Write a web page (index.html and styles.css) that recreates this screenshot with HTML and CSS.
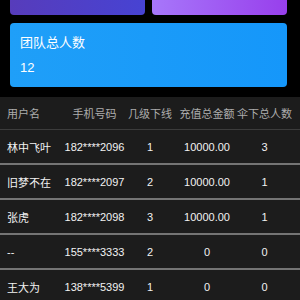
FILE: index.html
```html
<!DOCTYPE html>
<html lang="zh-CN">
<head>
  <meta charset="UTF-8">
  <meta name="viewport" content="width=device-width, initial-scale=1">
  <title>团队</title>
  <link rel="stylesheet" href="styles.css">
</head>
<body>
<div class="summary">
  <div class="card-row">
    <div class="card card-violet"></div>
    <div class="card card-purple"></div>
  </div>
  <div class="card card-blue">
    <div class="card-title">团队总人数</div>
    <div class="card-value">12</div>
  </div>
</div>
<div class="team-table">
  <div class="row head">
    <div class="cell name">用户名</div>
    <div class="cell">手机号码</div>
    <div class="cell">几级下线</div>
    <div class="cell">充值总金额</div>
    <div class="cell">伞下总人数</div>
  </div>
  <div class="row">
    <div class="cell name">林中飞叶</div>
    <div class="cell">182****2096</div>
    <div class="cell">1</div>
    <div class="cell">10000.00</div>
    <div class="cell">3</div>
  </div>
  <div class="row">
    <div class="cell name">旧梦不在</div>
    <div class="cell">182****2097</div>
    <div class="cell">2</div>
    <div class="cell">10000.00</div>
    <div class="cell">1</div>
  </div>
  <div class="row">
    <div class="cell name">张虎</div>
    <div class="cell">182****2098</div>
    <div class="cell">3</div>
    <div class="cell">10000.00</div>
    <div class="cell">1</div>
  </div>
  <div class="row">
    <div class="cell name">--</div>
    <div class="cell">155****3333</div>
    <div class="cell">2</div>
    <div class="cell">0</div>
    <div class="cell">0</div>
  </div>
  <div class="row">
    <div class="cell name">王大为</div>
    <div class="cell">138****5399</div>
    <div class="cell">1</div>
    <div class="cell">0</div>
    <div class="cell">0</div>
  </div>
</div>
</body>
</html>
```

FILE: styles.css
```css
body {
  margin: 0;
  background: #000000;
  color: #ffffff;
  font-family: "Liberation Sans", "Noto Sans CJK SC", sans-serif;
  overflow: hidden;
}

.summary {
  display: flex;
  flex-direction: column;
  gap: 8px;
  padding: 0 13px 10px 10px;
}

.card-row {
  display: flex;
  gap: 7px;
}

/* only the lower edge of these two is still on screen */
.card-row > .card {
  flex: 1 1 0;
  height: 15px;
  padding: 0;
  border-radius: 0 0 4px 4px;
}

.card {
  border-radius: 4px;
  box-sizing: border-box;
  padding: 11px 10px 10px;
  display: flex;
  flex-direction: column;
  gap: 7px;
}

.card-title,
.card-value {
  font-size: 13px;
  line-height: 18px;
}

.card-violet {
  background-image: linear-gradient(90deg, #573cbb 0%, #4743d3 100%);
}

.card-purple {
  background-image: linear-gradient(90deg, #a777fa 0%, #983fec 100%);
}

.card-blue {
  background-image: linear-gradient(90deg, #1f9ff8 0%, #1597fa 100%);
}

.team-table {
  background: #1c1c1c;
}

.row {
  display: grid;
  grid-template-columns: 64px 61px 50px 64px 51px;
  padding-right: 10px;
  height: 33px;
  border-bottom: 2px solid #747474;
  font-size: 11px;
  color: #f2f2f2;
}

.row.head {
  height: 32px;
  border-bottom: 1px solid #3c3c3c;
  color: #acacac;
}

.cell {
  display: flex;
  align-items: center;
  justify-content: center;
  white-space: nowrap;
}

.cell.name {
  justify-content: flex-start;
  padding-left: 7px;
}
```
